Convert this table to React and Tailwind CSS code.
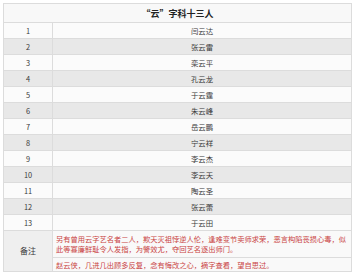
const names = [
  "闫云达", "张云雷", "栾云平", "孔云龙", "于云霆", "朱云峰", "岳云鹏",
  "宁云祥", "李云杰", "李云天", "陶云圣", "张云蕾", "于云田",
];

export default function App() {
  return (
    <div className="bg-white p-[3px]" style={{ fontFamily: '"Noto Sans CJK SC", "Liberation Sans", sans-serif' }}>
      <table className="w-[349px] border-collapse border border-[#dcdcdc] text-[7.4px] text-[#3a3a3a]">
        <thead>
          <tr className="h-[19px] bg-[#f8f8f8]">
            <th colSpan={2} className="border border-[#dcdcdc] text-[9px] font-bold leading-none text-[#222]">
              “云”字科十三人
            </th>
          </tr>
        </thead>
        <tbody>
          {names.map((name, i) => (
            <tr key={name} className={`h-[16px] ${i % 2 === 1 ? "bg-[#e8e8e8]" : "bg-[#fbfbfb]"}`}>
              <td className="w-[49px] border border-[#dcdcdc] text-center leading-none">{i + 1}</td>
              <td className="border border-[#dcdcdc] text-center leading-none">{name}</td>
            </tr>
          ))}
          <tr className="h-[27px] bg-[#f9f9f9]">
            <td rowSpan={2} className="border border-[#dcdcdc] bg-[#efefef] text-center text-[8px]">备注</td>
            <td className="border border-[#dcdcdc] px-[3px] py-[3px] text-[7.25px] leading-[10px] text-[#c94444]">
              另有曾用云字艺名者二人，欺天灭祖悖逆人伦，逢难变节卖师求荣，恶言构陷丧损心毒，似此等寡廉鲜耻令人发指，为警效尤，夺回艺名逐出师门。
            </td>
          </tr>
          <tr className="h-[14px] bg-[#f9f9f9]">
            <td className="border border-[#dcdcdc] px-[3px] text-[7.25px] leading-[10px] text-[#c94444]">
              赵云侠，几进几出顾多反复，念有悔改之心，摘字查看，望自思过。
            </td>
          </tr>
        </tbody>
      </table>
    </div>
  );
}
